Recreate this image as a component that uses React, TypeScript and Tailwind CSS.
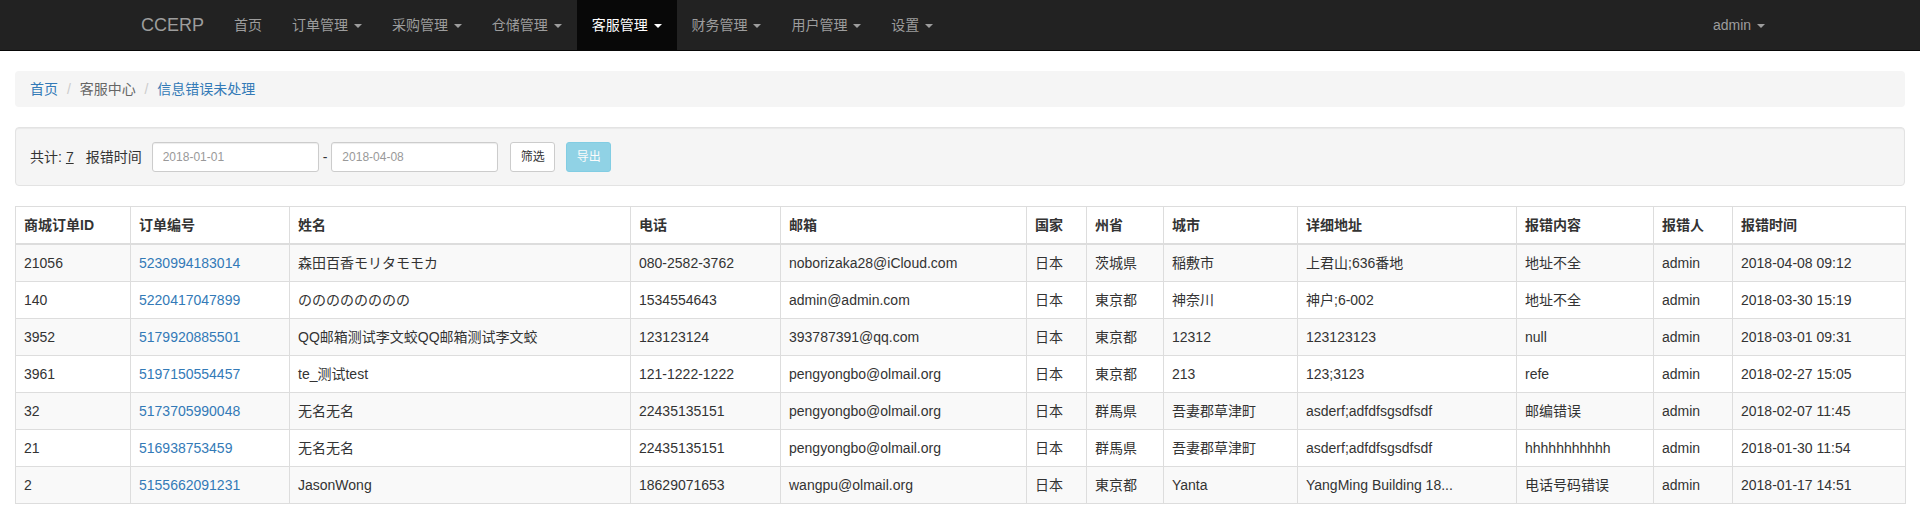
import React from "react";

const navItems = [
  { label: "首页", caret: false },
  { label: "订单管理", caret: true },
  { label: "采购管理", caret: true },
  { label: "仓储管理", caret: true },
  { label: "客服管理", caret: true, active: true },
  { label: "财务管理", caret: true },
  { label: "用户管理", caret: true },
  { label: "设置", caret: true },
];

const columns = [
  { title: "商城订单ID", w: "w-[115px]" },
  { title: "订单编号", w: "w-[159px]" },
  { title: "姓名", w: "w-[341px]" },
  { title: "电话", w: "w-[150px]" },
  { title: "邮箱", w: "w-[246px]" },
  { title: "国家", w: "w-[60px]" },
  { title: "州省", w: "w-[77px]" },
  { title: "城市", w: "w-[134px]" },
  { title: "详细地址", w: "w-[219px]" },
  { title: "报错内容", w: "w-[137px]" },
  { title: "报错人", w: "w-[79px]" },
  { title: "报错时间", w: "w-[173px]" },
];

const rows = [
  ["21056", "5230994183014", "森田百香モリタモモカ", "080-2582-3762", "noborizaka28@iCloud.com", "日本", "茨城県", "稲敷市", "上君山;636番地", "地址不全", "admin", "2018-04-08 09:12"],
  ["140", "5220417047899", "のののののののの", "1534554643", "admin@admin.com", "日本", "東京都", "神奈川", "神户;6-002", "地址不全", "admin", "2018-03-30 15:19"],
  ["3952", "5179920885501", "QQ邮箱测试李文蛟QQ邮箱测试李文蛟", "123123124", "393787391@qq.com", "日本", "東京都", "12312", "123123123", "null", "admin", "2018-03-01 09:31"],
  ["3961", "5197150554457", "te_测试test", "121-1222-1222", "pengyongbo@olmail.org", "日本", "東京都", "213", "123;3123", "refe", "admin", "2018-02-27 15:05"],
  ["32", "5173705990048", "无名无名", "22435135151", "pengyongbo@olmail.org", "日本", "群馬県", "吾妻郡草津町", "asderf;adfdfsgsdfsdf", "邮编错误", "admin", "2018-02-07 11:45"],
  ["21", "516938753459", "无名无名", "22435135151", "pengyongbo@olmail.org", "日本", "群馬県", "吾妻郡草津町", "asderf;adfdfsgsdfsdf", "hhhhhhhhhhh", "admin", "2018-01-30 11:54"],
  ["2", "5155662091231", "JasonWong", "18629071653", "wangpu@olmail.org", "日本", "東京都", "Yanta", "YangMing Building 18...", "电话号码错误", "admin", "2018-01-17 14:51"],
];

function Caret() {
  return (
    <span className="inline-block w-0 h-0 ml-[2px] align-middle border-t-[4px] border-x-[4px] border-x-transparent border-t-current" />
  );
}

export default function App() {
  return (
    <div className="min-h-screen bg-white text-[14px] leading-[20px] text-[#333] font-['Liberation_Sans','Noto_Sans_CJK_SC',sans-serif]">
      {/* navbar */}
      <div className="h-[51px] bg-[#222] border-b border-[#080808] flex items-stretch pl-[126px] pr-[140px]">
        <a className="px-[15px] py-[15px] text-[18px] leading-[20px] text-[#9d9d9d]">CCERP</a>
        <div className="flex">
          {navItems.map((n) => (
            <a
              key={n.label}
              className={`px-[15px] py-[15px] whitespace-nowrap ${
                n.active ? "bg-[#080808] text-white" : "text-[#9d9d9d]"
              }`}
            >
              {n.label}
              {n.caret && (
                <>
                  {" "}
                  <Caret />
                </>
              )}
            </a>
          ))}
        </div>
        <div className="ml-auto flex">
          <a className="px-[15px] py-[15px] text-[#9d9d9d]">
            admin <Caret />
          </a>
        </div>
      </div>

      <div className="px-[15px] pt-[20px]">
        {/* breadcrumb */}
        <div className="h-[36px] bg-[#f5f5f5] rounded-[4px] px-[15px] py-[8px] whitespace-nowrap">
          <a className="text-[#337ab7]">首页</a>{" "}
          <span className="px-[5px] text-[#ccc]">/&nbsp;</span>
          <span className="text-[#666]">客服中心</span>{" "}
          <span className="px-[5px] text-[#ccc]">/&nbsp;</span>
          <a className="text-[#337ab7]">信息错误未处理</a>
        </div>

        {/* filter well */}
        <div className="mt-[20px] h-[59px] bg-[#f5f5f5] border border-[#e3e3e3] rounded-[4px] shadow-[inset_0_1px_1px_rgba(0,0,0,0.05)] pl-[14px] flex items-center">
          <span>共计:</span>
          <a className="ml-[4px] underline text-[#333]">7</a>
          <span className="ml-[12px]">报错时间</span>
          <input
            className="ml-[10px] w-[167px] h-[30px] px-[10px] text-[12px] bg-white border border-[#ccc] rounded-[3px] shadow-[inset_0_1px_1px_rgba(0,0,0,0.075)] placeholder:text-[#999] outline-none"
            placeholder="2018-01-01"
          />
          <span className="px-[4px]">-</span>
          <input
            className="w-[167px] h-[30px] px-[10px] text-[12px] bg-white border border-[#ccc] rounded-[3px] shadow-[inset_0_1px_1px_rgba(0,0,0,0.075)] placeholder:text-[#999] outline-none"
            placeholder="2018-04-08"
          />
          <button className="ml-[12px] w-[45px] h-[30px] text-[12px] text-[#333] bg-white border border-[#ccc] rounded-[3px]">
            筛选
          </button>
          <button className="ml-[11px] w-[45px] h-[30px] text-[12px] text-white bg-[#5bc0de] border border-[#46b8da] rounded-[3px] opacity-65">
            导出
          </button>
        </div>

        {/* table */}
        <table className="mt-[20px] mb-[20px] w-full table-fixed border-collapse border border-[#ddd]">
          <colgroup>
            {columns.map((c) => (
              <col key={c.title} className={c.w} />
            ))}
          </colgroup>
          <thead>
            <tr>
              {columns.map((c) => (
                <th
                  key={c.title}
                  className="p-[8px] text-left font-bold align-bottom border border-[#ddd] border-b-2 whitespace-nowrap"
                >
                  {c.title}
                </th>
              ))}
            </tr>
          </thead>
          <tbody>
            {rows.map((r, i) => (
              <tr key={i} className={i % 2 === 0 ? "bg-[#f9f9f9]" : "bg-white"}>
                {r.map((v, j) => (
                  <td
                    key={j}
                    className={`p-[8px] border border-[#ddd] whitespace-nowrap overflow-hidden ${
                      j === 1 ? "text-[#337ab7]" : ""
                    }`}
                  >
                    {v}
                  </td>
                ))}
              </tr>
            ))}
          </tbody>
        </table>
      </div>
    </div>
  );
}
